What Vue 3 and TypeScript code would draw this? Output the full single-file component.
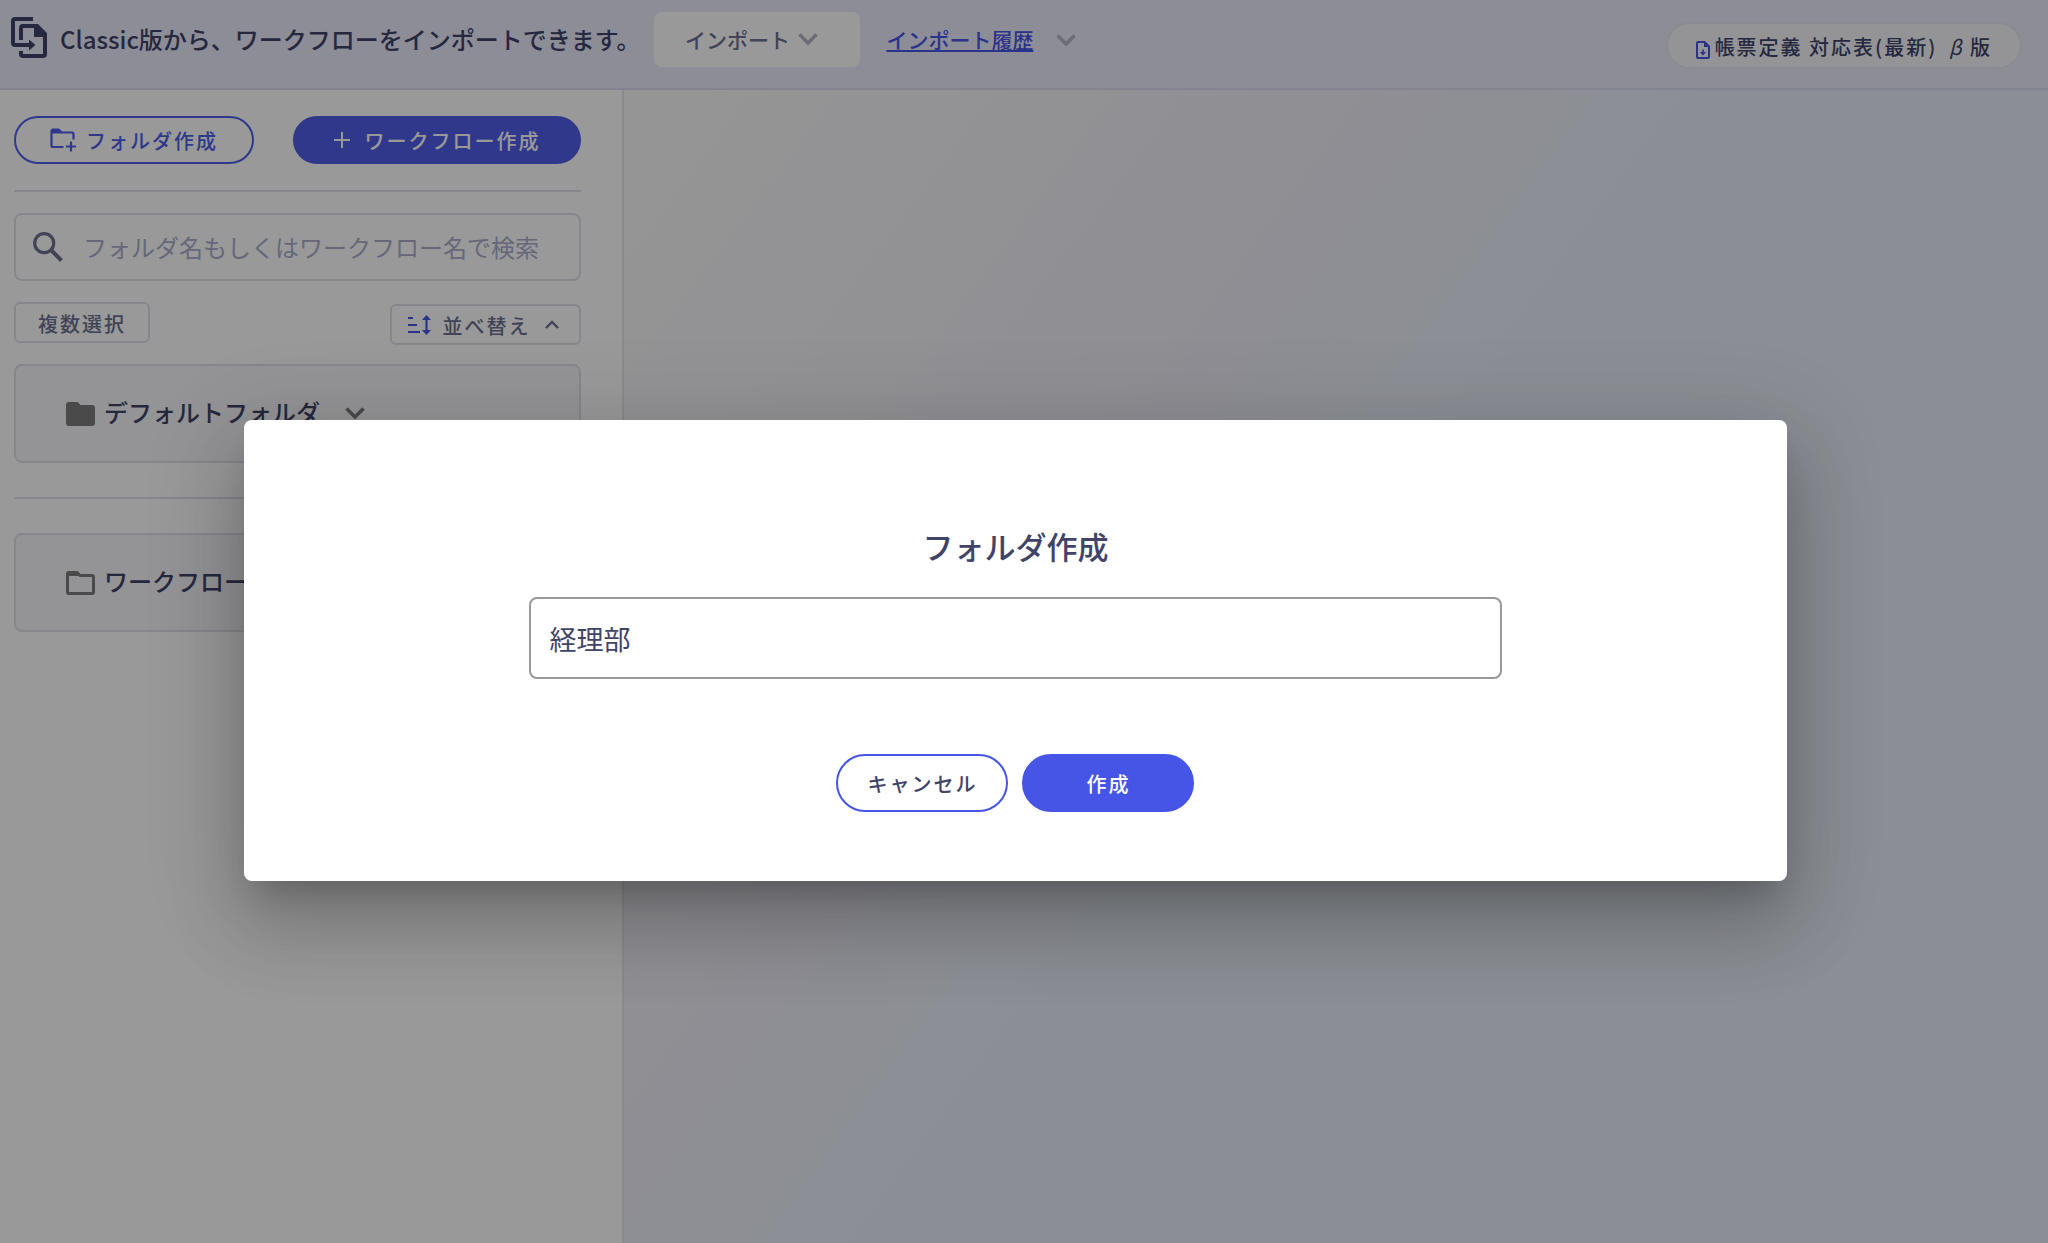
<script setup lang="ts">
import { ref } from 'vue'

const keyword = ref('')
const folderName = ref('経理部')
const folders = [
  { name: 'デフォルトフォルダ', filled: true },
  { name: 'ワークフロー', filled: false },
]
</script>

<template>
  <div class="app">
    <header class="topbar">
      <svg class="import-icon" width="36" height="41" viewBox="0 0 36 41" fill="none" stroke="currentColor" stroke-width="4" aria-hidden="true">
        <path d="M22 2H4Q2 2 2 4V26Q2 28 4 28H19" />
        <path d="M10 23V11Q10 9 12 9H27M34 19V37Q34 39 32 39H12Q10 39 10 37V34" />
        <path d="M18 22.500L24.500 28L18 33.500ZM23 7H27L36 16V20H23Z" fill="currentColor" stroke="none" />
      </svg>
      <p class="lead">Classic版から、ワークフローをインポートできます。</p>
      <button type="button" class="import-button">
        インポート
        <svg width="20" height="13" viewBox="0 0 20 13" fill="none" stroke="currentColor" stroke-width="3.500" aria-hidden="true"><path d="M1.500 1.500L10 10L18.500 1.500" /></svg>
      </button>
      <a href="#history" class="history">インポート履歴</a>
      <svg class="history-chevron" width="20" height="13" viewBox="0 0 20 13" fill="none" stroke="currentColor" stroke-width="3.500" aria-hidden="true"><path d="M1.500 1.500L10 10L18.500 1.500" /></svg>
      <button type="button" class="definition">
        <svg width="14" height="18" viewBox="0 0 14 18" fill="none" stroke="currentColor" stroke-width="2" aria-hidden="true">
          <path d="M2 1H8.500L13 5.500V16Q13 17 12 17H2Q1 17 1 16V2Q1 1 2 1Z" />
          <path d="M8 0.500V6H13.500Z" fill="currentColor" stroke="none" />
          <path d="M7 8.500V12" stroke-width="1.600" />
          <path d="M3.800 11H10.200L7 14.500Z" fill="currentColor" stroke="none" />
        </svg>
        <span>帳票定義 対応表(最新) <i>β</i> 版</span>
      </button>
    </header>

    <div class="body">
      <aside class="sidebar">
        <div class="actions">
          <button type="button" class="pill outline">
            <svg width="26" height="24" viewBox="0 0 26 24" fill="none" stroke="currentColor" stroke-width="2.200" aria-hidden="true">
              <path d="M13.500 19H3Q1.500 19 1.500 17.500V3H10L12 4.500H22Q23.500 4.500 23.500 6V11.500" />
              <path d="M1 2Q1 .5 2.500 .5H9L12 4V5.500H1Z" fill="currentColor" stroke="none" />
              <path d="M16 18.500H26M21 13.500V23.500" />
            </svg>
            <span>フォルダ作成</span>
          </button>
          <button type="button" class="pill solid">
            <svg width="16" height="16" viewBox="0 0 16 16" fill="none" stroke="currentColor" stroke-width="2" aria-hidden="true"><path d="M8 0V16M0 8H16" /></svg>
            <span>ワークフロー作成</span>
          </button>
        </div>
        <hr />
        <label class="search">
          <svg width="30" height="30" viewBox="0 0 30 30" fill="none" stroke="currentColor" aria-hidden="true">
            <circle cx="11.200" cy="11.200" r="9.500" stroke-width="3.200" />
            <path d="M17.500 17.500L28.500 28.500" stroke-width="4" />
          </svg>
          <input v-model="keyword" type="search" aria-label="検索" placeholder="フォルダ名もしくはワークフロー名で検索" />
        </label>
        <div class="tools">
          <button type="button" class="tool"><span>複数選択</span></button>
          <button type="button" class="tool sort">
            <svg class="sort-icon" width="23" height="20" viewBox="0 0 23 20" fill="none" stroke="currentColor" stroke-width="2.200" aria-hidden="true">
              <path d="M0 3H5M0 10H9M0 17H12M18.500 3V17" />
              <path d="M18.500 0L23 5H14ZM18.500 20L23 15H14Z" fill="currentColor" stroke="none" />
            </svg>
            <span>並べ替え</span>
            <svg class="sort-chevron" width="14" height="9" viewBox="0 0 14 9" fill="none" stroke="currentColor" stroke-width="2.400" aria-hidden="true"><path d="M1 8L7 2L13 8" /></svg>
          </button>
        </div>
        <section v-for="folder in folders" :key="folder.name" class="group">
          <div class="card">
            <svg class="folder" width="29" height="24" viewBox="0 0 29 24" fill="none" stroke="currentColor" stroke-width="3" aria-hidden="true">
              <path d="M3 1.500H11L14 4.500H26Q27.500 4.500 27.500 6V21Q27.500 22.500 26 22.500H3Q1.500 22.500 1.500 21V3Q1.500 1.500 3 1.500Z" :fill="folder.filled ? 'currentColor' : 'none'" />
              <path d="M1.500 1.500H11L14 5H1.500Z" fill="currentColor" stroke="none" />
            </svg>
            <span class="folder-name">{{ folder.name }}</span>
            <svg class="card-chevron" width="20" height="13" viewBox="0 0 20 13" fill="none" stroke="currentColor" stroke-width="3.500" aria-hidden="true"><path d="M1.500 1.500L10 10L18.500 1.500" /></svg>
          </div>
        </section>
      </aside>
      <main class="canvas"></main>
    </div>

    <div class="overlay">
      <form class="dialog" role="dialog" aria-modal="true" aria-labelledby="dialog-title" @submit.prevent>
        <h2 id="dialog-title">フォルダ作成</h2>
        <input v-model="folderName" class="name" type="text" aria-labelledby="dialog-title" />
        <div class="dialog-actions">
          <button type="button" class="cancel"><span>キャンセル</span></button>
          <button type="submit" class="create"><span>作成</span></button>
        </div>
      </form>
    </div>
  </div>
</template>

<style>
body {
  margin: 0;
}
</style>

<style scoped>
.app,
.app * {
  box-sizing: border-box;
}
.app {
  --ink: #3f4468;
  --blue: #4655e5;
  --line: #e0e0ec;
  display: flex;
  flex-direction: column;
  min-height: 100vh;
  color: var(--ink);
  font-family: 'Noto Sans CJK JP', 'Noto Sans', sans-serif;
  font-size: 20px;
  line-height: 28px;
}
button,
input {
  font: inherit;
  color: inherit;
  margin: 0;
}
button {
  display: flex;
  align-items: center;
  justify-content: center;
  white-space: nowrap;
  padding: 0;
  border: 0;
  background: none;
  font-weight: 500;
  letter-spacing: 2px;
}
button span {
  padding-top: 2px;
}
svg {
  flex: none;
}
.topbar {
  display: flex;
  align-items: flex-start;
  height: 90px;
  padding: 12px 26px 0 11px;
  background: #ebebfd;
  border-bottom: 2px solid #dcdcf2;
}
.import-icon {
  margin-top: 5px;
}
.lead {
  margin: 9px 0 0 13px;
  font-size: 24px;
  line-height: 36px;
  font-weight: 500;
  white-space: nowrap;
}
.import-button {
  width: 206px;
  height: 55px;
  margin-left: 14px;
  padding: 0 12px 2px 0;
  gap: 8px;
  background: #fff;
  border-radius: 8px;
  color: #6d7090;
  font-size: 21px;
  letter-spacing: 0;
}
.import-button svg {
  margin-top: 2px;
}
.import-button svg,
.history-chevron {
  color: #b4b5c4;
}
.history {
  margin: 13px 23px 0 26px;
  color: var(--blue);
  font-size: 21px;
  font-weight: 500;
  white-space: nowrap;
}
.history-chevron {
  margin-top: 22px;
}
.definition {
  height: 47px;
  margin: 10px 0 0 auto;
  padding: 0 28px;
  gap: 5px;
  background: #f7f7fa;
  border: 2px solid #e6e6f2;
  border-radius: 24px;
}
.definition svg {
  color: var(--blue);
  margin-top: 8px;
}
.definition i {
  margin-left: 5px;
  font-weight: 400;
}
.body {
  flex: 1;
  display: flex;
}
.sidebar {
  width: 624px;
  padding: 26px 41px 0 14px;
  background: #fff;
  border-right: 2px solid #e4e4ee;
}
.canvas {
  flex: 1;
  background: linear-gradient(126deg, #f9f9fa 0%, #f5f5f8 15%, #eeedf7 34%, #e8eff9 48%, #e8eff9 100%);
}
.actions {
  --blue: #505ee8;
  display: flex;
  justify-content: space-between;
}
.pill {
  height: 48px;
  border: 2px solid var(--blue);
  border-radius: 24px;
}
.outline {
  width: 240px;
  gap: 10px;
  color: var(--blue);
}
.solid {
  width: 288px;
  gap: 15px;
  background: var(--blue);
  color: #fff;
}
hr {
  height: 2px;
  margin: 26px 0 21px;
  border: 0;
  background: var(--line);
}
.search {
  display: flex;
  align-items: center;
  height: 68px;
  padding-left: 17px;
  gap: 20px;
  border: 2px solid var(--line);
  border-radius: 8px;
  color: #6d7090;
}
.search input {
  flex: 1;
  min-width: 0;
  padding: 0;
  border: 0;
  outline: 0;
  background: none;
  font-size: 24px;
  line-height: 36px;
}
.search input::placeholder {
  color: #aaadcb;
  opacity: 1;
}
.tools {
  display: flex;
  justify-content: space-between;
  align-items: flex-start;
  height: 43px;
  margin: 21px 0 19px;
}
.tool {
  width: 136px;
  height: 41px;
  border: 2px solid var(--line);
  border-radius: 6px;
  color: #6d7090;
}
.sort {
  width: 191px;
  align-self: flex-end;
  padding-right: 5px;
}
.sort-icon {
  color: var(--blue);
  margin-right: 12px;
}
.sort-chevron {
  margin-left: 14px;
}
.group + .group {
  margin-top: 34px;
  padding-top: 34px;
  border-top: 2px solid var(--line);
}
.card {
  display: flex;
  align-items: center;
  height: 99px;
  padding-left: 50px;
  background: #f7f7fb;
  border: 2px solid var(--line);
  border-radius: 8px;
  font-size: 24px;
  line-height: 36px;
  font-weight: 500;
}
.folder-name {
  padding-bottom: 4px;
}
.folder {
  color: #7c7c7c;
  margin-right: 9px;
}
.card-chevron {
  color: #7c7c7c;
  margin-left: 25px;
}
.overlay {
  position: absolute;
  inset: 0;
  display: flex;
  align-items: center;
  justify-content: center;
  padding: 58px 17px 0 0;
  background: rgba(0, 0, 0, 0.4);
}
.dialog {
  display: flex;
  flex-direction: column;
  align-items: center;
  width: 76%;
  padding: 102px 24px 69px;
  background: #fff;
  border-radius: 8px;
  box-shadow: 0 22px 30px -14px rgba(0, 0, 0, 0.2), 0 48px 76px 6px rgba(0, 0, 0, 0.14), 0 18px 92px 16px rgba(0, 0, 0, 0.12);
}
.dialog h2 {
  margin: 0 0 27px;
  font-size: 31px;
  line-height: 48px;
  font-weight: 500;
}
.name {
  width: 65%;
  height: 82px;
  padding: 0 18px;
  border: 2px solid #999;
  border-radius: 8px;
  background: #fff;
  font-size: 27px;
  outline: 0;
}
.dialog-actions {
  display: flex;
  gap: 14px;
  margin-top: 75px;
}
.cancel,
.create {
  width: 172px;
  height: 58px;
  border: 2px solid var(--blue);
  border-radius: 29px;
}
.create {
  background: var(--blue);
  color: #fff;
}
</style>
